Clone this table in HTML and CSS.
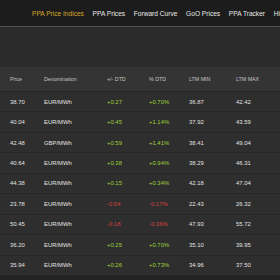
FILE: index.html
```html
<!DOCTYPE html>
<html lang="en">
<head>
<meta charset="utf-8">
<title>PPA Price Indices</title>
<link rel="stylesheet" href="styles.css">
</head>
<body>
<nav class="topnav">
  <a class="nav-item active">PPA Price Indices</a>
  <a class="nav-item">PPA Prices</a>
  <a class="nav-item">Forward Curve</a>
  <a class="nav-item">GoO Prices</a>
  <a class="nav-item">PPA Tracker</a>
  <a class="nav-item">Historical</a>
</nav>
<div class="spacer"></div>
<div class="table">
  <div class="row head">
    <span>Price</span><span>Denomination</span><span>+/- DTD</span><span>% DTD</span><span>LTM MIN</span><span>LTM MAX</span>
  </div>
  <div class="row"><span>38.70</span><span>EUR/MWh</span><span class="up">+0.27</span><span class="up">+0.70%</span><span>36.87</span><span>42.42</span></div>
  <div class="row"><span>40.04</span><span>EUR/MWh</span><span class="up">+0.45</span><span class="up">+1.14%</span><span>37.92</span><span>43.59</span></div>
  <div class="row"><span>42.48</span><span>GBP/MWh</span><span class="up">+0.59</span><span class="up">+1.41%</span><span>38.41</span><span>49.04</span></div>
  <div class="row"><span>40.64</span><span>EUR/MWh</span><span class="up">+0.38</span><span class="up">+0.94%</span><span>38.29</span><span>46.31</span></div>
  <div class="row"><span>44.38</span><span>EUR/MWh</span><span class="up">+0.15</span><span class="up">+0.34%</span><span>42.18</span><span>47.04</span></div>
  <div class="row"><span>23.78</span><span>EUR/MWh</span><span class="down">-0.04</span><span class="down">-0.17%</span><span>22.43</span><span>26.32</span></div>
  <div class="row"><span>50.45</span><span>EUR/MWh</span><span class="down">-0.18</span><span class="down">-0.36%</span><span>47.93</span><span>55.72</span></div>
  <div class="row"><span>36.20</span><span>EUR/MWh</span><span class="up">+0.25</span><span class="up">+0.70%</span><span>35.10</span><span>39.95</span></div>
  <div class="row"><span>35.94</span><span>EUR/MWh</span><span class="up">+0.26</span><span class="up">+0.73%</span><span>34.96</span><span>37.50</span></div>
</div>
</body>
</html>
```

FILE: styles.css
```css
html, body {
  margin: 0;
  padding: 0;
}
body {
  background: #242424;
  font-family: "Liberation Sans", Arial, sans-serif;
  width: 280px;
  height: 280px;
  overflow: hidden;
}
.topnav {
  display: flex;
  align-items: center;
  gap: 8.7px;
  height: 26px;
  padding-left: 32px;
  background: #1c1c1c;
  border-bottom: 1px solid #4f4f4f;
  white-space: nowrap;
  overflow: hidden;
}
.nav-item {
  font-size: 6.6px;
  color: #e8e8e8;
  flex: none;
  line-height: 1;
  padding-top: 2px;
}
.nav-item.active {
  color: #d7a92b;
}
.spacer {
  height: 40px;
  background: #2b2b2b;
}
.table {
  background: #2e2e2e;
}
.row {
  display: grid;
  grid-template-columns: 34px 63px 42px 40px 47px 1fr;
  align-items: center;
  box-sizing: border-box;
  height: 20.45px;
  padding-left: 10px;
  border-bottom: 1px solid #262626;
  font-size: 5.9px;
  color: #e2e2e2;
  white-space: nowrap;
}
.row.head {
  height: 25px;
  background: #343434;
  font-size: 5.3px;
  color: #c4c4c4;
}
.up {
  color: #9fd13b;
}
.down {
  color: #d8403e;
}
```
